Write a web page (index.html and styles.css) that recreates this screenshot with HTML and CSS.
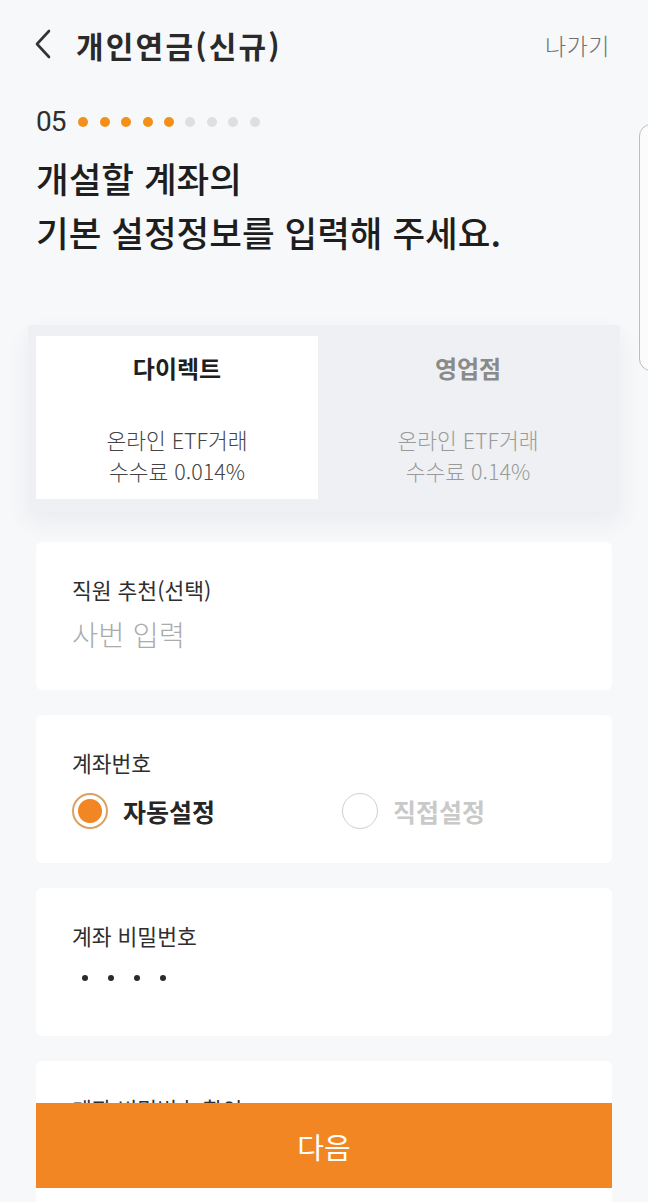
FILE: index.html
```html
<!DOCTYPE html>
<html lang="ko">
<head>
<meta charset="utf-8">
<title>개인연금(신규)</title>
<link rel="stylesheet" href="styles.css">
</head>
<body>
<div class="app">
  <header class="topbar">
    <div class="topbar-left">
      <svg class="back" width="18" height="30" viewBox="0 0 18 30" aria-hidden="true">
        <polyline points="15,2 3,15 15,28" fill="none" stroke="#333" stroke-width="2.6" stroke-linecap="round" stroke-linejoin="round"/>
      </svg>
      <h1 class="title">개인연금(신규)</h1>
    </div>
    <span class="exit">나가기</span>
  </header>

  <main class="content">
    <div class="step">
      <span class="step-num">05</span>
      <ul class="dots">
        <li class="dot on"></li><li class="dot on"></li><li class="dot on"></li><li class="dot on"></li><li class="dot on"></li>
        <li class="dot"></li><li class="dot"></li><li class="dot"></li><li class="dot"></li>
      </ul>
    </div>

    <h2 class="headline">개설할 계좌의<br>기본 설정정보를 입력해 주세요.</h2>

    <div class="tabs">
      <div class="tab active">
        <div class="tab-title">다이렉트</div>
        <div class="tab-desc">온라인 ETF거래<br>수수료 0.014%</div>
      </div>
      <div class="tab">
        <div class="tab-title">영업점</div>
        <div class="tab-desc">온라인 ETF거래<br>수수료 0.14%</div>
      </div>
    </div>

    <section class="field">
      <div class="label">직원 추천(선택)</div>
      <div class="placeholder">사번 입력</div>
    </section>

    <section class="field">
      <div class="label">계좌번호</div>
      <div class="radios">
        <div class="radio checked"><span class="circle"></span><span class="radio-text">자동설정</span></div>
        <div class="radio"><span class="circle"></span><span class="radio-text">직접설정</span></div>
      </div>
    </section>

    <section class="field">
      <div class="label">계좌 비밀번호</div>
      <div class="pw">
        <span class="pw-dot"></span><span class="pw-dot"></span><span class="pw-dot"></span><span class="pw-dot"></span>
      </div>
    </section>

    <section class="field">
      <div class="label">계좌 비밀번호 확인</div>
    </section>
  </main>

  <div class="bottom-bar">
    <button class="next" type="button">다음</button>
  </div>

  <div class="edge-handle"></div>
</div>
</body>
</html>
```

FILE: styles.css
```css
html, body {
  margin: 0;
  padding: 0;
  height: 100%;
  overflow: hidden;
}

body {
  background: #f7f8fa;
  font-family: "Noto Sans CJK KR", "Noto Sans", sans-serif;
  color: #222;
}

.app {
  height: 100vh;
  overflow: hidden;
}

.topbar {
  height: 90px;
  display: flex;
  align-items: center;
  justify-content: space-between;
  padding: 0 38px 0 34px;
}

.topbar-left {
  display: flex;
  align-items: center;
  gap: 24px;
}

.back {
  display: block;
  margin-top: -2px;
}

.title {
  margin: 0;
  font-size: 30px;
  font-weight: 700;
  letter-spacing: 2.2px;
  color: #2a2a2a;
  line-height: 40px;
}

.exit {
  font-size: 23px;
  color: #6f6f6f;
  font-weight: 300;
  letter-spacing: 0.5px;
}

.step {
  display: flex;
  align-items: center;
  margin: 18px 0 0 36px;
  height: 28px;
}

.step-num {
  font-family: Roboto, "Liberation Sans", sans-serif;
  font-size: 28px;
  line-height: 28px;
  color: #2f2f2f;
  letter-spacing: -1px;
  margin-right: 13px;
}

.dots {
  list-style: none;
  margin: 0;
  padding: 0;
  display: flex;
  gap: 11.4px;
}

.dot {
  width: 10px;
  height: 10px;
  border-radius: 50%;
  background: #dedfe1;
}

.dot.on {
  background: #f39019;
}

.headline {
  margin: 15px 0 0 36px;
  font-size: 35.5px;
  line-height: 54px;
  font-weight: 500;
  color: #1e1e1e;
}

.tabs {
  margin: 66px 28px 0 28px;
  padding: 11px 8px 13px 8px;
  background: #eef0f3;
  display: grid;
  grid-template-columns: 1fr 1fr;
  box-shadow: 0 10px 22px rgba(60, 70, 90, 0.07);
}

.tab {
  text-align: center;
  padding: 16px 0 13px 0;
  color: #9a9a9a;
}

.tab.active {
  background: #ffffff;
  color: #333;
  margin-right: 6px;
}

.tab-title {
  font-size: 24px;
  line-height: 32px;
  font-weight: 700;
  color: #8a8a8a;
}

.tab.active .tab-title {
  color: #1f1f1f;
}

.tab-desc {
  margin-top: 40px;
  font-size: 21.5px;
  line-height: 31px;
  font-weight: 300;
}

.tab.active .tab-desc {
  color: #444;
}

.field {
  margin: 30px 36px 0 36px;
  height: 148px;
  box-sizing: border-box;
  padding: 34px 36px 0 36px;
  background: #fff;
  border-radius: 6px;
}

.field + .field {
  margin-top: 25px;
}

.label {
  font-size: 21.5px;
  line-height: 28px;
  color: #2e2e2e;
}

.placeholder {
  margin-top: 12px;
  font-size: 28.5px;
  line-height: 36px;
  color: #ababab;
  font-weight: 300;
}

.radios {
  margin-top: 16px;
  display: grid;
  grid-template-columns: 270px 1fr;
}

.radio {
  display: flex;
  align-items: center;
  gap: 15px;
  height: 36px;
}

.circle {
  width: 34px;
  height: 34px;
  border-radius: 50%;
  border: 1.5px solid #cfcfcf;
  box-sizing: content-box;
  flex: none;
}

.radio.checked .circle {
  width: 36px;
  height: 36px;
  border: 2px solid #dea062;
  box-sizing: border-box;
  background: radial-gradient(circle, #f28624 0, #f28624 11.5px, #ffffff 12.5px);
}

.radio-text {
  font-size: 25px;
  font-weight: 700;
  color: #c9c9c9;
}

.radio.checked .radio-text {
  color: #262626;
}

.pw {
  margin-top: 22px;
  display: flex;
  gap: 20px;
  padding-left: 10px;
  height: 12px;
  align-items: center;
}

.pw-dot {
  width: 6px;
  height: 6px;
  border-radius: 50%;
  background: #2b2b2b;
}

.bottom-bar {
  position: fixed;
  left: 36px;
  right: 36px;
  bottom: 14px;
}

.next {
  display: block;
  width: 100%;
  height: 85px;
  border: none;
  border-radius: 0;
  background: #f28622;
  color: #fff;
  font-family: "Noto Sans CJK KR", sans-serif;
  font-size: 29px;
  font-weight: 400;
  padding: 0;
}

.edge-handle {
  position: fixed;
  left: 639px;
  top: 124px;
  width: 30px;
  height: 247px;
  box-sizing: border-box;
  border: 1.5px solid #bdbdbd;
  border-radius: 12px;
  background: #fbfbfb;
}
```
